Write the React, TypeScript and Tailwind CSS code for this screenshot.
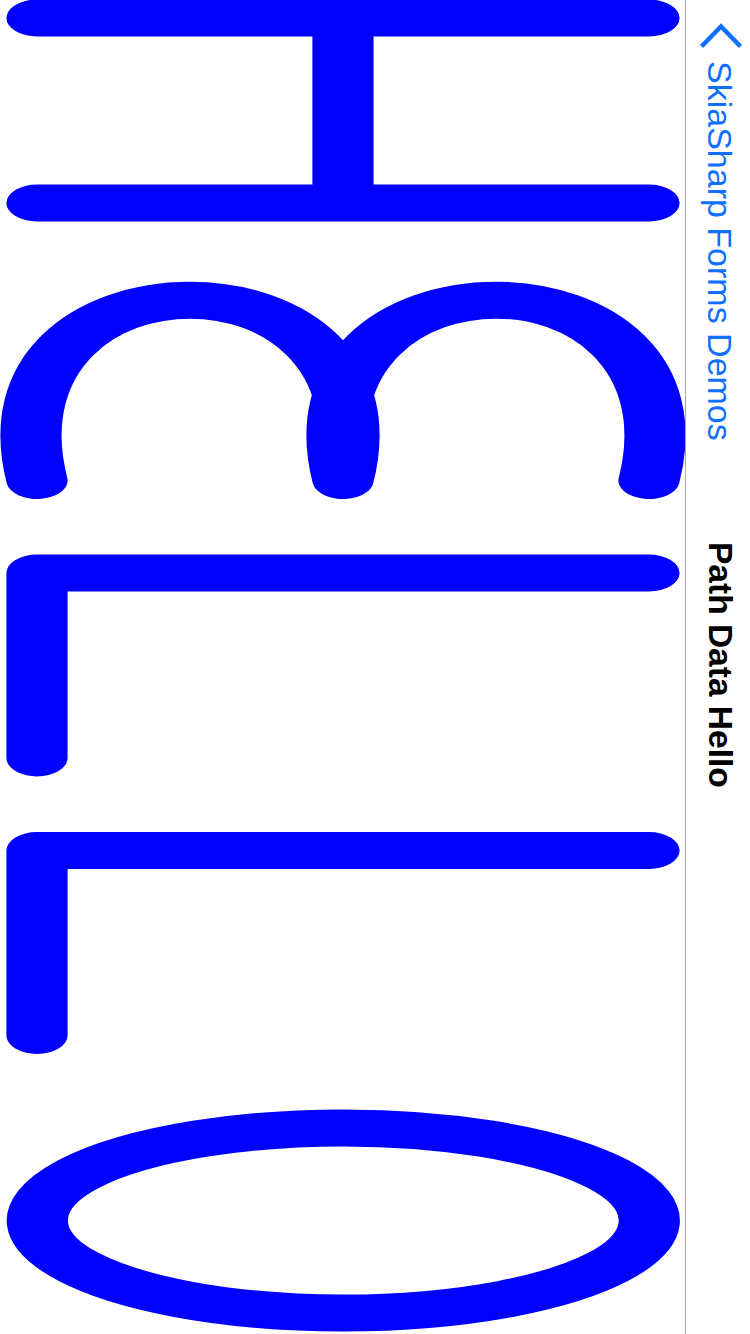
import React from "react";

// path data from the original demo, drawn in its own units
const HELLO_PATH =
  "M 0 0 L 0 100 M 0 50 L 50 50 M 50 0 L 50 100 " +
  "M 125 0 C 60 -10, 60 60, 125 50 C 60 40, 60 110, 125 100 " +
  "M 150 0 L 150 100 L 200 100 " +
  "M 225 0 L 225 100 L 275 100 " +
  "M 300 50 A 25 50 0 1 0 300 49.9 Z";

function HelloCanvas() {
  return (
    <div className="w-[685px] h-full bg-white">
      <svg width="685" height="1334" className="block">
        {/* page is turned on its side, so path x runs down and path y runs left */}
        <g transform="matrix(0 3.7 -6.12 0 649 18)">
          <path
            d={HELLO_PATH}
            fill="none"
            stroke="#0000ff"
            strokeWidth={10}
            strokeLinecap="round"
            strokeLinejoin="round"
          />
        </g>
      </svg>
    </div>
  );
}

function NavBar() {
  return (
    <div className="w-[64px] h-full flex flex-col items-center pl-[4px] bg-white border-l border-[#a7a7aa] font-['Liberation_Sans',Arial,sans-serif]">
      <div className="h-[542px] shrink-0 w-full flex flex-col items-center pt-[23px]">
        <svg width="44" height="28" viewBox="0 0 44 28" className="ml-[2px]">
          <path
            d="M2.5 23.5 L22 3.5 L41.5 23.5"
            fill="none"
            stroke="#0f6fff"
            strokeWidth={4.5}
            strokeLinecap="butt"
            strokeLinejoin="miter"
          />
        </svg>
        <span className="mt-[10px] [writing-mode:vertical-rl] text-[34px] leading-[64px] text-[#0f6fff] whitespace-nowrap">
          SkiaSharp Forms Demos
        </span>
      </div>
      <span className="[writing-mode:vertical-rl] text-[33.5px] leading-[64px] font-bold text-black whitespace-nowrap">
        Path Data Hello
      </span>
      <div className="flex-1" />
    </div>
  );
}

export default function App() {
  return (
    <div className="w-[750px] h-[1334px] flex flex-row bg-white overflow-hidden">
      <HelloCanvas />
      <NavBar />
    </div>
  );
}
